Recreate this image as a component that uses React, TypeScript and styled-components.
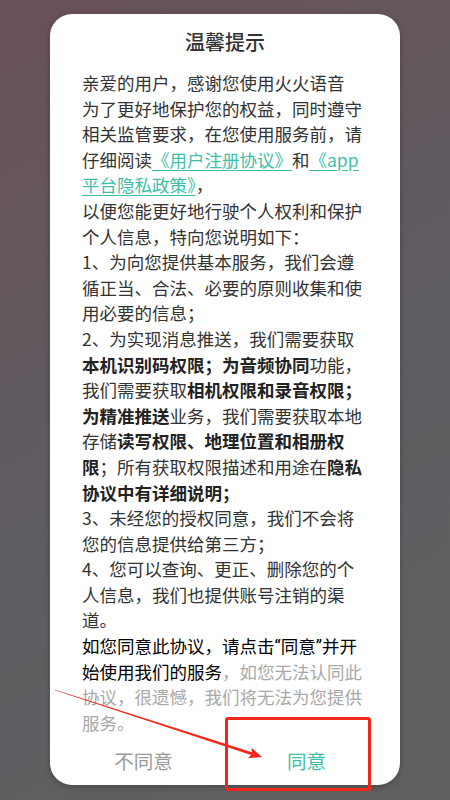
import React from 'react';
import styled, { createGlobalStyle } from 'styled-components';

const GlobalStyle = createGlobalStyle`
    html, body {
        margin: 0;
        padding: 0;
    }
    body {
        font-family: 'Noto Sans CJK SC', 'Noto Sans', sans-serif;
    }
`;

const Screen = styled.div`
    position: relative;
    width: 450px;
    height: 800px;
    box-sizing: border-box;
    padding: 14px 50px 15px;
    background: linear-gradient(150deg, rgb(106, 80, 88) 0%, rgb(96, 90, 96) 40%, rgb(94, 95, 98) 70%, rgb(96, 96, 96) 100%);
    overflow: hidden;
`;

const Card = styled.div`
    height: 100%;
    background-color: #fff;
    border-radius: 22px;
    box-shadow: 0 2px 6px rgba(0, 0, 0, 0.25);
    display: flex;
    flex-direction: column;
`;

const Title = styled.div`
    padding-top: 14px;
    text-align: center;
    font-size: 20px;
    line-height: 28px;
    font-weight: 500;
    color: #333;
`;

const Body = styled.div`
    padding: 14px 32px 0;
    font-size: 17.5px;
    line-height: 25.6px;
    color: #333;
    white-space: nowrap;
`;

const Strong = styled.span`
    font-weight: bold;
    color: #222;
`;

const Dark = styled.span`
    color: #000;
`;

const Quote = styled.span`
    font-family: Roboto, 'Noto Sans', sans-serif;
    line-height: 0;
`;

const Faded = styled.span`
    color: #a8a8a8;
`;

const Link = styled.span`
    color: #3dbfa7;
    text-decoration: underline;
    text-underline-offset: 3px;
`;

const Actions = styled.div`
    flex: 1;
    display: flex;
    padding: 0 12px;
`;

const ActionButton = styled.div<{ $primary?: boolean }>`
    flex: 1;
    display: flex;
    align-items: center;
    justify-content: center;
    font-size: 19.5px;
    color: ${(p) => (p.$primary ? '#3cbfa7' : '#9a9a9a')};
`;

const Highlight = styled.div`
    position: absolute;
    left: 225px;
    top: 717px;
    width: 146px;
    height: 74px;
    box-sizing: border-box;
    border: 3px solid #f4261c;
    border-radius: 3px;
`;

const ArrowLayer = styled.svg`
    position: absolute;
    left: 0;
    top: 0;
    width: 450px;
    height: 800px;
    pointer-events: none;
`;

const App = () => {
    return (
        <>
            <GlobalStyle />
            <Screen>
                <Card>
                    <Title>温馨提示</Title>
                    <Body>
                        亲爱的用户，感谢您使用火火语音
                        <br />
                        为了更好地保护您的权益，同时遵守
                        <br />
                        相关监管要求，在您使用服务前，请
                        <br />
                        仔细阅读<Link>《用户注册协议》</Link>和<Link>《app</Link>
                        <br />
                        <Link>平台隐私政策》</Link>，
                        <br />
                        以便您能更好地行驶个人权利和保护
                        <br />
                        个人信息，特向您说明如下：
                        <br />
                        1、为向您提供基本服务，我们会遵
                        <br />
                        循正当、合法、必要的原则收集和使
                        <br />
                        用必要的信息；
                        <br />
                        2、为实现消息推送，我们需要获取
                        <br />
                        <Strong>本机识别码权限；为音频协同</Strong>功能，
                        <br />
                        我们需要获取<Strong>相机权限和录音权限；</Strong>
                        <br />
                        <Strong>为精准推送</Strong>业务，我们需要获取本地
                        <br />
                        存储<Strong>读写权限、地理位置和相册权</Strong>
                        <br />
                        <Strong>限</Strong>；所有获取权限描述和用途在<Strong>隐私</Strong>
                        <br />
                        <Strong>协议中有详细说明；</Strong>
                        <br />
                        3、未经您的授权同意，我们不会将
                        <br />
                        您的信息提供给第三方；
                        <br />
                        4、您可以查询、更正、删除您的个
                        <br />
                        人信息，我们也提供账号注销的渠
                        <br />
                        道。
                        <br />
                        <Dark>
                            如您同意此协议，请点击<Quote>“</Quote>同意<Quote>”</Quote>并开
                        </Dark>
                        <br />
                        <Dark>始使用我们的服务</Dark>
                        <Faded>，如您无法认同此</Faded>
                        <br />
                        <Faded>协议，很遗憾，我们将无法为您提供</Faded>
                        <br />
                        <Faded>服务。</Faded>
                    </Body>
                    <Actions>
                        <ActionButton>不同意</ActionButton>
                        <ActionButton $primary>同意</ActionButton>
                    </Actions>
                </Card>
                <Highlight />
                <ArrowLayer viewBox="0 0 450 800">
                    <polygon
                        fill="#f4261c"
                        points="55.1,689.7 251.97,752.28 251.33,747.77 262,757 247.95,758.23 251.11,754.94 54.9,690.3"
                    />
                </ArrowLayer>
            </Screen>
        </>
    );
};

export default App;
